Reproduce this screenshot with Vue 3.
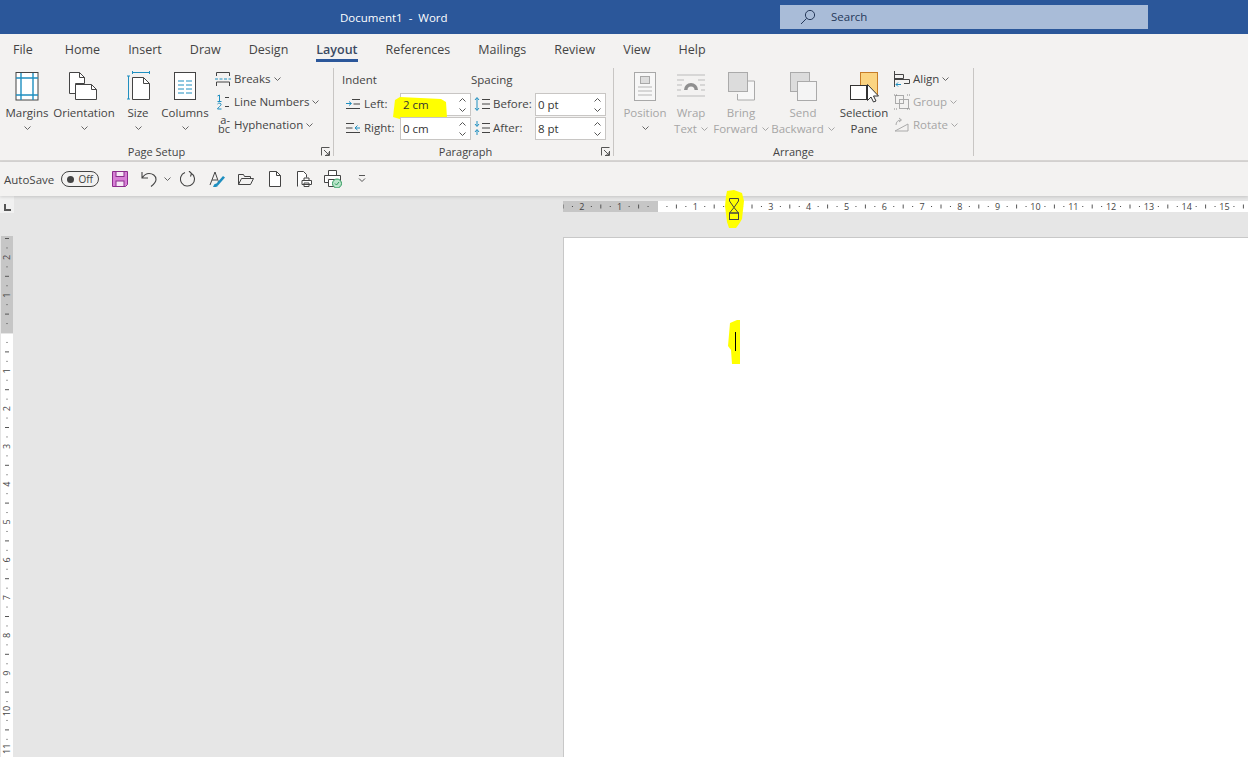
<script setup>
import { computed } from 'vue'

const CM = 37.8
const tabs = ['File', 'Home', 'Insert', 'Draw', 'Design', 'Layout', 'References', 'Mailings', 'Review', 'View', 'Help']

// ruler marks, in quarter centimetres from the left edge of the text area
function rulerMarks(from, to) {
  const marks = []
  for (let q = from; q <= to; q++) {
    if (q === 0) continue
    const kind = q % 4 === 0 ? 'num' : q % 4 === 2 || q % 4 === -2 ? 'line' : 'dot'
    marks.push({ id: q, pos: (q / 4) * CM, kind, label: Math.abs(q / 4) })
  }
  return marks
}

const hMarks = computed(() => rulerMarks(-10, 63).filter(m => m.id !== 8))
const vMarks = computed(() => rulerMarks(-10, 45))
</script>

<template>
  <div class="word">
    <header class="titlebar">
      <div class="doc-title">Document1&nbsp; - &nbsp;Word</div>
      <div class="search">
        <svg class="search-icon" viewBox="0 0 16 16"><circle cx="10" cy="6" r="4.6" /><path d="M6.6 9.4 1 15" /></svg>
        <span>Search</span>
      </div>
    </header>

    <nav class="tabs">
      <span v-for="tab in tabs" :key="tab" class="tab" :class="{ active: tab === 'Layout' }">{{ tab }}</span>
    </nav>

    <section class="ribbon">
      <div class="group page-setup">
        <div class="group-body">
          <div class="big w54">
            <svg class="big-icon" viewBox="0 0 34 34">
              <rect x="6" y="1.500" width="22" height="27.500" fill="#fff" stroke="#444" />
              <path d="M11 2v27M23 2v27M6 7h22M6 24h22" stroke="#1f8fc0" fill="none" stroke-width="1.400" />
            </svg>
            <span>Margins</span>
            <svg class="chev" viewBox="0 0 7 4"><path d="M.5.5l3 3 3-3" /></svg>
          </div>
          <div class="big w60">
            <svg class="big-icon" viewBox="0 0 34 34">
              <path d="M2.500 1.500h10l5 5v6H8.500v10h-6z" fill="#fff" stroke="#444" />
              <path d="M12.500 1.500v5h5" fill="none" stroke="#444" />
              <path d="M8.500 13.500h16l5 5v10h-21z" fill="#fff" stroke="#444" />
              <path d="M24.500 13.500v5h5" fill="none" stroke="#444" />
            </svg>
            <span>Orientation</span>
            <svg class="chev" viewBox="0 0 7 4"><path d="M.5.5l3 3 3-3" /></svg>
          </div>
          <div class="big w48">
            <svg class="big-icon" viewBox="0 0 34 34">
              <path d="M11.500 1.500h17M11.500 0v3M28.500 0v3M7.500 5v23M6 5h3M6 28h3" stroke="#1f8fc0" fill="none" />
              <path d="M11.500 6.500h11l6 6v16h-17z" fill="#fff" stroke="#444" />
              <path d="M22.500 6.500v6h6" fill="none" stroke="#444" />
            </svg>
            <span>Size</span>
            <svg class="chev" viewBox="0 0 7 4"><path d="M.5.500l3 3 3-3" /></svg>
          </div>
          <div class="big w46">
            <svg class="big-icon" viewBox="0 0 34 34">
              <rect x="6.500" y="1.500" width="21" height="27" fill="#fff" stroke="#444" />
              <path d="M10 10h6M18 10h6M10 14h6M18 14h6M10 18h6M18 18h6M10 22h6M18 22h6" stroke="#1f8fc0" fill="none" />
            </svg>
            <span>Columns</span>
            <svg class="chev" viewBox="0 0 7 4"><path d="M.5.5l3 3 3-3" /></svg>
          </div>
          <div class="small-col ms6">
            <div class="small">
              <svg class="small-icon" viewBox="0 0 16 16">
                <path d="M1.500 5V1.500h13V5M1.500 15v-4h13v4" fill="none" stroke="#444" />
                <path d="M0 8h16" stroke="#1f8fc0" stroke-dasharray="3 1.500" />
              </svg>
              <span>Breaks</span>
              <svg class="chev" viewBox="0 0 7 4"><path d="M.5.5l3 3 3-3" /></svg>
            </div>
            <div class="small">
              <svg class="small-icon" viewBox="0 0 16 16">
                <path d="M2.500 2 4.500 1v6M2.500 7.500h4M2.500 10c1-1.500 4-1 3.500.8C5.600 12 3 13.500 2.500 15h4" fill="none" stroke="#1f8fc0" />
                <path d="M10 3.500h4M10 12.500h4" stroke="#444" />
              </svg>
              <span>Line Numbers</span>
              <svg class="chev" viewBox="0 0 7 4"><path d="M.5.5l3 3 3-3" /></svg>
            </div>
            <div class="small">
              <span class="hyph-icon">a-<br />bc</span>
              <span>Hyphenation</span>
              <svg class="chev" viewBox="0 0 7 4"><path d="M.5.5l3 3 3-3" /></svg>
            </div>
          </div>
        </div>
        <div class="group-label">Page Setup</div>
        <svg class="launcher" viewBox="0 0 9 9"><path d="M.5 8.500v-8h8M8.500 4v4.500H4M3 3l5 5M5 8h3V5" fill="none" stroke="#555" /></svg>
      </div>

      <div class="group paragraph">
        <div class="group-body para-body">
          <div class="para-heads">
            <span class="indent-head">Indent</span>
            <span>Spacing</span>
          </div>
          <div class="para-row">
            <svg class="para-icon" viewBox="0 0 14 14">
              <path d="M6 2.500h8M7.500 7h6.500M0 11.500h14" stroke="#444" fill="none" />
              <path d="M0 6.500h5M3 4.500l2.500 2-2.500 2" stroke="#1f8fc0" fill="none" />
            </svg>
            <span class="para-label">Left:</span>
            <div class="spin">
              <svg class="blob" viewBox="0 0 54 23" preserveAspectRatio="none"><path d="M2 3 7 0l41 2 5 3 1 16-14 2H10L0 20z" /></svg>
              <span class="spin-value">2 cm</span>
              <span class="spin-arrows">
                <svg viewBox="0 0 7 4"><path d="M.5 3.500l3-3 3 3" /></svg>
                <svg viewBox="0 0 7 4"><path d="M.5.5l3 3 3-3" /></svg>
              </span>
            </div>
            <svg class="para-icon spacing-icon" viewBox="0 0 16 14">
              <path d="M3 1v12M1 3l2-2.500L5 3M1 11l2 2.500L5 11" stroke="#1f8fc0" fill="none" />
              <path d="M8 2.500h8M8 7h8M8 11.500h8" stroke="#444" fill="none" />
            </svg>
            <span class="para-label wide">Before:</span>
            <div class="spin">
              <span class="spin-value">0 pt</span>
              <span class="spin-arrows">
                <svg viewBox="0 0 7 4"><path d="M.5 3.500l3-3 3 3" /></svg>
                <svg viewBox="0 0 7 4"><path d="M.5.5l3 3 3-3" /></svg>
              </span>
            </div>
          </div>
          <div class="para-row">
            <svg class="para-icon" viewBox="0 0 14 14">
              <path d="M0 2.500h8M0 7h6.500M0 11.500h14" stroke="#444" fill="none" />
              <path d="M9 7h5M11.500 4.500 9 7l2.500 2" stroke="#1f8fc0" fill="none" />
            </svg>
            <span class="para-label">Right:</span>
            <div class="spin">
              <span class="spin-value">0 cm</span>
              <span class="spin-arrows">
                <svg viewBox="0 0 7 4"><path d="M.5 3.500l3-3 3 3" /></svg>
                <svg viewBox="0 0 7 4"><path d="M.5.5l3 3 3-3" /></svg>
              </span>
            </div>
            <svg class="para-icon spacing-icon" viewBox="0 0 16 14">
              <path d="M3 0v5M1 3l2 2.500L5 3M3 9v5M1 11l2-2.500L5 11" stroke="#1f8fc0" fill="none" />
              <path d="M8 2.500h8M8 7h8M8 11.500h8" stroke="#444" fill="none" />
            </svg>
            <span class="para-label wide">After:</span>
            <div class="spin">
              <span class="spin-value">8 pt</span>
              <span class="spin-arrows">
                <svg viewBox="0 0 7 4"><path d="M.5 3.500l3-3 3 3" /></svg>
                <svg viewBox="0 0 7 4"><path d="M.5.5l3 3 3-3" /></svg>
              </span>
            </div>
          </div>
        </div>
        <div class="group-label">Paragraph</div>
        <svg class="launcher" viewBox="0 0 9 9"><path d="M.5 8.500v-8h8M8.500 4v4.500H4M3 3l5 5M5 8h3V5" fill="none" stroke="#555" /></svg>
      </div>

      <div class="group arrange">
        <div class="group-body">
          <div class="big w46 off">
            <svg class="big-icon" viewBox="0 0 34 34">
              <rect x="6.500" y="1.500" width="21" height="28" fill="#f7f7f7" stroke="#a8a8a8" />
              <rect x="12.500" y="5.500" width="9" height="7" fill="#ddd" stroke="#a8a8a8" />
              <path d="M10 16h14M10 20h14M10 24h14" stroke="#b5b5b5" />
            </svg>
            <span>Position</span>
            <svg class="chev" viewBox="0 0 7 4"><path d="M.5.5l3 3 3-3" /></svg>
          </div>
          <div class="big w46 off">
            <svg class="big-icon" viewBox="0 0 34 34">
              <path d="M3 4h28M3 9h7M24 9h7M3 14h5M26 14h5M3 19h4M27 19h4M3 25h28" stroke="#bbb" />
              <path d="M10 19a7 7 0 0 1 14 0h-3.500a3.500 3.500 0 0 0-7 0z" fill="#8f8f8f" />
            </svg>
            <span>Wrap</span>
            <span>Text <svg class="chev inline" viewBox="0 0 7 4"><path d="M.5.5l3 3 3-3" /></svg></span>
          </div>
          <div class="big w54 off">
            <svg class="big-icon" viewBox="0 0 34 34">
              <path d="M24 10h6.500v19h-17v-6" fill="#f7f7f7" stroke="#aaa" />
              <rect x="4.500" y="1.500" width="19" height="19" fill="#dcdcdc" stroke="#aaa" />
            </svg>
            <span>Bring</span>
            <span>Forward <svg class="chev inline" viewBox="0 0 7 4"><path d="M.5.5l3 3 3-3" /></svg></span>
          </div>
          <div class="big w70 off">
            <svg class="big-icon" viewBox="0 0 34 34">
              <rect x="4.500" y="1.500" width="19" height="19" fill="#dcdcdc" stroke="#aaa" />
              <rect x="11.500" y="10.500" width="19" height="19" fill="#f4f4f4" stroke="#aaa" />
            </svg>
            <span>Send</span>
            <span>Backward <svg class="chev inline" viewBox="0 0 7 4"><path d="M.5.5l3 3 3-3" /></svg></span>
          </div>
          <div class="big w52">
            <svg class="big-icon" viewBox="0 0 34 34">
              <rect x="13.500" y="1.500" width="17" height="22" fill="#fbd481" stroke="#c77d28" />
              <rect x="3.500" y="14.500" width="16" height="14" fill="#fff" stroke="#333" />
              <path d="M20.500 13.500v16l3.500-3.500 2.500 5 2.500-1-2.500-5h5z" fill="#fff" stroke="#333" stroke-linejoin="round" />
            </svg>
            <span>Selection</span>
            <span>Pane</span>
          </div>
          <div class="small-col ms4">
            <div class="small">
              <svg class="small-icon" viewBox="0 0 16 16">
                <path d="M.5 0v16" stroke="#444" />
                <path d="M.5 3.500h9v4h-9M.5 8.500h15v4H10" fill="none" stroke="#444" />
                <path d="M7 13.500H2M4 11.500l-2 2 2 2" fill="none" stroke="#1f8fc0" />
              </svg>
              <span>Align</span>
              <svg class="chev" viewBox="0 0 7 4"><path d="M.5.5l3 3 3-3" /></svg>
            </div>
            <div class="small off">
              <svg class="small-icon" viewBox="0 0 16 16">
                <rect x="1.500" y="1.500" width="8" height="8" fill="none" stroke="#aaa" />
                <rect x="5.500" y="5.500" width="9" height="9" fill="none" stroke="#aaa" />
                <path d="M0 1h3M0 15h3M13 1h3M13 15h3" stroke="#888" stroke-dasharray="1 1" />
              </svg>
              <span>Group</span>
              <svg class="chev" viewBox="0 0 7 4"><path d="M.5.5l3 3 3-3" /></svg>
            </div>
            <div class="small off">
              <svg class="small-icon" viewBox="0 0 16 16">
                <path d="M1 14 14 7v7zM2 8c0-3 2-5 5-5" fill="none" stroke="#aaa" />
                <path d="M5 1l2.500 2L5 5" fill="none" stroke="#aaa" />
              </svg>
              <span>Rotate</span>
              <svg class="chev" viewBox="0 0 7 4"><path d="M.5.5l3 3 3-3" /></svg>
            </div>
          </div>
        </div>
        <div class="group-label">Arrange</div>
      </div>
    </section>

    <section class="qat">
      <span class="autosave">AutoSave</span>
      <span class="toggle"><i></i><b>Off</b></span>
      <span class="qat-btn first">
        <svg viewBox="0 0 16 16" class="qat-icon">
          <path d="M.5.500h15v13l-2 2H.5z" fill="#d77fd6" stroke="#8a2d8c" />
          <rect x="4" y=".5" width="8" height="5" fill="#f6e6f6" stroke="#8a2d8c" />
          <rect x="4" y="10" width="8" height="5.500" fill="#f6e6f6" stroke="#8a2d8c" />
        </svg>
      </span>
      <span class="qat-btn">
        <svg viewBox="0 0 16 16" class="qat-icon">
          <path d="M1 1v6h6M1 7c2-3 4-4.500 7-4.500 3.500 0 7 2 7 6 0 3-2.500 5-5 7" fill="none" stroke="#444" stroke-width="1.100" />
        </svg>
      </span>
      <svg class="chev undo-chev" viewBox="0 0 7 4"><path d="M.5.5l3 3 3-3" /></svg>
      <span class="qat-btn redo">
        <svg viewBox="0 0 16 16" class="qat-icon">
          <path d="M5 1.500A7 7 0 1 0 11 2M9 0l2.500 2.500-1 3" fill="none" stroke="#444" stroke-width="1.100" />
        </svg>
      </span>
      <span class="qat-btn">
        <svg viewBox="0 0 16 16" class="qat-icon">
          <path d="M1 14 6 1l3.500 10M3 9h5" fill="none" stroke="#444" />
          <path d="M7 13 14 5l2 1.500-7 8z" fill="#1f8fc0" />
          <path d="M4 16c1-3 2-4 4-3l1 2c-1 1-3 1-5 1z" fill="#1f8fc0" />
        </svg>
      </span>
      <span class="qat-btn">
        <svg viewBox="0 0 16 16" class="qat-icon">
          <path d="M.5 13.500V3.500h5l1 2h6v2M.5 13.500h12l3-6H3.500z" fill="none" stroke="#444" />
        </svg>
      </span>
      <span class="qat-btn">
        <svg viewBox="0 0 16 16" class="qat-icon">
          <path d="M2.500.5h7l4 4v11h-11z" fill="#fff" stroke="#444" />
          <path d="M9.500.5v4h4" fill="none" stroke="#444" />
        </svg>
      </span>
      <span class="qat-btn">
        <svg viewBox="0 0 16 16" class="qat-icon">
          <path d="M1.500 15.500V.5h6l3 3v3" fill="#fff" stroke="#444" />
          <path d="M6 9.500h9.500v4H6zM8 9.500V7h5v2.500M8 12h5v3.500H8z" fill="#fff" stroke="#444" />
        </svg>
      </span>
      <span class="qat-btn">
        <svg viewBox="0 0 18 18" class="qat-icon big-qat">
          <path d="M4.500 5V.5h8V5M.5 5.500h16v7h-4M4.500 12.500h-4v-7" fill="#fff" stroke="#444" />
          <path d="M4.500 9.500h6v7h-6z" fill="#fff" stroke="#444" />
          <circle cx="13" cy="13.500" r="4.500" fill="#b9e4c9" stroke="#2e9a5d" />
          <path d="M11 13.500l1.500 1.500 2.500-3" fill="none" stroke="#2e9a5d" />
        </svg>
      </span>
      <span class="qat-btn">
        <svg viewBox="0 0 8 8" class="qat-more"><path d="M1 .5h6M1 3.500l3 3 3-3" fill="none" stroke="#555" /></svg>
      </span>
    </section>

    <main class="workspace">
      <div class="corner"><span></span></div>
      <div class="h-ruler-wrap">
        <svg class="h-ruler" width="685" height="11">
          <rect x="0" y="0" width="95" height="11" fill="#c6c6c6" />
          <rect x="95" y="0" width="590" height="11" fill="#fff" />
          <g v-for="m in hMarks" :key="m.id">
            <text v-if="m.kind === 'num'" :x="94.5 + m.pos" y="9" class="ruler-num" text-anchor="middle">{{ m.label }}</text>
            <path v-else-if="m.kind === 'line'" :d="`M${94.5 + m.pos} 3.500v4`" stroke="#555" />
            <path v-else :d="`M${94.5 + m.pos} 5v1`" stroke="#444" />
          </g>
        </svg>
        <div class="indent-marker">
          <svg class="marker-blob" viewBox="0 0 20 38"><path d="M3 1l7-1 8 3 2 8-2 18-3 5-3 4H5l-2-6-2-16 1-10z" /></svg>
          <svg class="marker" viewBox="0 0 10 22">
            <path d="M.5.5h9V3L5 9.500.5 3zM5 9.500 9.500 15H.5z" fill="none" stroke="#444" />
            <rect x=".5" y="15" width="9" height="6.500" fill="none" stroke="#444" />
          </svg>
        </div>
      </div>
      <div class="v-ruler-wrap">
        <svg class="v-ruler" width="12" height="521">
          <rect x="0" y="0" width="12" height="97" fill="#c6c6c6" />
          <rect x="0" y="98" width="12" height="423" fill="#fff" />
          <g v-for="m in vMarks" :key="m.id">
            <text
              v-if="m.kind === 'num'"
              class="ruler-num"
              text-anchor="middle"
              :transform="`translate(9 ${97 + m.pos}) rotate(-90)`"
            >{{ m.label }}</text>
            <path v-else-if="m.kind === 'line'" :d="`M4 ${97 + m.pos}h4`" stroke="#555" />
            <path v-else :d="`M5.500 ${97 + m.pos}h1`" stroke="#444" />
          </g>
        </svg>
      </div>
      <div class="canvas">
        <div class="page">
          <div class="caret">
            <svg class="caret-blob" viewBox="0 0 12 44"><path d="M2 3 9 0h3v44H4L3 30 0 26z" /></svg>
            <i></i>
          </div>
        </div>
      </div>
    </main>
  </div>
</template>

<style>
html, body {
  margin: 0;
  overflow: hidden;
}
</style>

<style scoped>
.word {
  width: 1248px;
  height: 757px;
  display: flex;
  flex-direction: column;
  overflow: hidden;
  background: #e6e6e6;
  font-family: "Open Sans", "Noto Sans", sans-serif;
  font-size: 11.5px;
  color: #444;
}

/* title bar */
.titlebar {
  height: 34px;
  display: flex;
  align-items: center;
  background: #2b579a;
  flex: none;
}
.doc-title {
  width: 440px;
  margin-left: 340px;
  color: #fff;
  font-size: 11.5px;
}
.search {
  width: 368px;
  height: 24px;
  margin-top: -1px;
  display: flex;
  align-items: center;
  background: #a9bcd8;
  color: #26395a;
  font-size: 11.5px;
}
.search-icon {
  width: 16px;
  height: 16px;
  margin: 0 15px 0 20px;
  fill: none;
  stroke: #26395a;
}

/* tabs */
.tabs {
  height: 34px;
  flex: none;
  display: flex;
  gap: 28px;
  padding-left: 13px;
  background: #f3f2f1;
  font-size: 12.5px;
}
.tab {
  height: 25px;
  line-height: 31px;
}
.tab:first-child {
  margin-right: 4px;
}
.tab.active {
  color: #3b4a63;
  font-weight: 600;
  border-bottom: 3px solid #2b579a;
}

/* ribbon */
.ribbon {
  height: 92px;
  flex: none;
  display: flex;
  background: #f3f2f1;
  border-bottom: 2px solid #d8d6d4;
  box-sizing: content-box;
}
.group {
  position: relative;
  display: flex;
  flex-direction: column;
  height: 88px;
  border-right: 1px solid #c8c6c4;
  box-sizing: border-box;
}
.page-setup { width: 334px; }
.paragraph { width: 280px; }
.arrange { width: 360px; padding-left: 8px; }
.group-body {
  flex: none;
  height: 76px;
  display: flex;
}
.group-label {
  flex: none;
  height: 16px;
  line-height: 16px;
  text-align: center;
  font-size: 11px;
}
.page-setup .group-label { padding-right: 20px; }
.paragraph .group-label { padding-right: 16px; }
.arrange .group-label { padding-right: 8px; }
.launcher {
  position: absolute;
  right: 3px;
  bottom: 0;
  width: 9px;
  height: 9px;
}
.big {
  display: flex;
  flex-direction: column;
  align-items: center;
  padding-top: 3px;
  line-height: 16px;
  white-space: nowrap;
}
.big-icon {
  width: 34px;
  height: 34px;
  flex: none;
}
.w46 { width: 46px; }
.w48 { width: 48px; }
.w52 { width: 52px; }
.w54 { width: 54px; }
.w60 { width: 60px; }
.w70 { width: 70px; }
.off { color: #a6a6a6; }
.chev {
  width: 7px;
  height: 4px;
  margin-top: 5px;
  fill: none;
  stroke: #666;
  flex: none;
}
.chev.inline {
  margin: 0 0 2px 1px;
  vertical-align: middle;
  stroke: #a6a6a6;
}
.small-col {
  display: flex;
  flex-direction: column;
  margin-top: -1px;
}
.ms6 { margin-left: 7px; }
.ms4 { margin-left: 4px; }
.small {
  height: 23px;
  display: flex;
  align-items: center;
  white-space: nowrap;
}
.small .chev {
  margin: 1px 0 0 3px;
}
.small.off .chev { stroke: #a6a6a6; }
.small-icon {
  width: 16px;
  height: 16px;
  margin-right: 3px;
  flex: none;
}
.hyph-icon {
  width: 15px;
  margin-right: 4px;
  font-size: 11px;
  line-height: 8.500px;
  text-align: right;
}

/* paragraph group */
.para-body {
  flex-direction: column;
  padding-left: 8px;
}
.para-heads {
  height: 25px;
  padding-top: 4px;
  line-height: 16px;
  box-sizing: border-box;
  display: flex;
}
.indent-head {
  width: 129px;
}
.para-row {
  height: 24px;
  display: flex;
  align-items: flex-start;
  padding-left: 4px;
}
.para-icon {
  width: 14px;
  height: 14px;
  margin: 4px 4px 0 0;
  flex: none;
}
.spacing-icon {
  width: 16px;
  margin: 4px 3px 0 3px;
}
.para-label {
  width: 36px;
  line-height: 22px;
}
.para-label.wide {
  width: 42px;
}
.spin {
  position: relative;
  width: 71px;
  height: 23px;
  box-sizing: border-box;
  display: flex;
  align-items: center;
  background: #fff;
  border: 1px solid #c8c6c4;
  padding-left: 2px;
}
.spin-value {
  position: relative;
  flex: 1;
  font-size: 11.5px;
  color: #333;
}
.spin-arrows {
  position: relative;
  width: 11px;
  display: flex;
  flex-direction: column;
  gap: 6px;
}
.spin-arrows svg {
  width: 7px;
  height: 4px;
  fill: none;
  stroke: #555;
}
.blob {
  position: absolute;
  left: -8px;
  top: 3px;
  width: 54px;
  height: 23px;
  fill: #ffff00;
}

/* quick access */
.qat {
  height: 34px;
  flex: none;
  display: flex;
  align-items: center;
  background: #f3f2f1;
  padding-left: 4px;
  box-shadow: 0 1px 3px rgba(0, 0, 0, 0.15);
  position: relative;
}
.autosave {
  width: 57px;
}
.toggle {
  width: 38px;
  height: 16px;
  box-sizing: border-box;
  display: flex;
  align-items: center;
  justify-content: space-between;
  padding: 0 5px;
  border: 1px solid #444;
  border-radius: 8px;
  font-size: 10px;
}
.toggle i {
  width: 7px;
  height: 7px;
  border-radius: 50%;
  background: #444;
}
.toggle b {
  font-weight: 400;
}
.qat-btn {
  width: 29px;
  display: flex;
  justify-content: center;
  flex: none;
}
.qat-btn.first { margin-left: 6.500px; }
.qat-btn.redo { margin-left: 3px; }
.qat-icon {
  width: 16px;
  height: 16px;
}
.qat-icon.big-qat {
  width: 18px;
  height: 18px;
}
.qat-more {
  width: 8px;
  height: 8px;
}
.undo-chev {
  margin: 0;
}

/* workspace */
.workspace {
  flex: 1;
  min-height: 0;
  display: grid;
  grid-template-columns: 14px 1fr;
  grid-template-rows: 40px 1fr;
}
.corner {
  width: 14px;
  height: 17px;
  background: #f1f1f1;
  display: flex;
  align-items: flex-end;
  justify-content: center;
}
.corner span {
  width: 7px;
  height: 7px;
  margin-bottom: 2px;
  border-left: 2px solid #555;
  border-bottom: 2px solid #555;
  box-sizing: border-box;
}
.h-ruler-wrap {
  position: relative;
  padding: 5px 0 0 549px;
}
.h-ruler, .v-ruler {
  display: block;
}
.ruler-num {
  font-size: 9px;
  fill: #444;
}
.indent-marker {
  position: absolute;
  left: 710px;
  top: -6px;
  width: 20px;
  height: 38px;
}
.marker-blob {
  position: absolute;
  inset: 0;
  fill: #ffff00;
}
.marker {
  position: absolute;
  left: 5px;
  top: 8px;
  width: 10px;
  height: 22px;
}
.v-ruler-wrap {
  margin-left: 1px;
  overflow: hidden;
}
.canvas {
  padding-left: 549px;
  margin-top: 1px;
  min-height: 0;
}
.page {
  height: 100%;
  box-sizing: border-box;
  background: #fff;
  border-top: 1px solid #c8c8c8;
  border-left: 1px solid #c8c8c8;
  padding: 94px 0 0 171px;
}
.caret {
  position: relative;
  width: 1px;
  height: 19px;
}
.caret i {
  position: absolute;
  inset: 0;
  background: #000;
}
.caret-blob {
  position: absolute;
  left: -7px;
  top: -12px;
  width: 12px;
  height: 44px;
  fill: #ffff00;
}
</style>
